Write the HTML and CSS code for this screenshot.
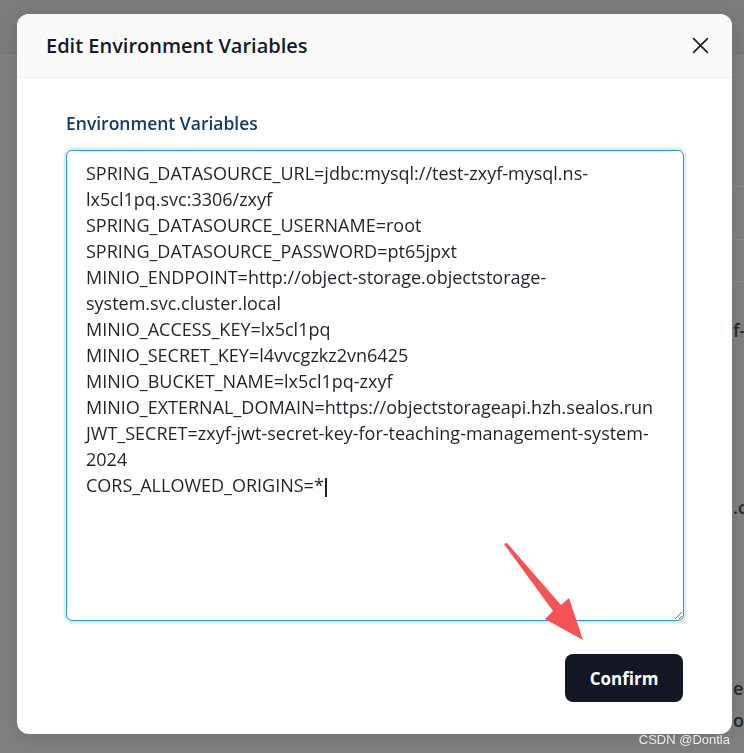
FILE: index.html
```html
<!DOCTYPE html>
<html lang="en">
<head>
<meta charset="utf-8">
<title>Edit Environment Variables</title>
<link rel="stylesheet" href="styles.css">
</head>
<body>
<div class="bg-page">
  <div class="bg-header"></div>
  <div class="bg-content">
    <div class="bg-row bg-row-1"></div>
    <div class="bg-row bg-row-2"></div>
    <div class="bg-row bg-row-3"></div>
    <div class="bg-text bg-t1">f-</div>
    <div class="bg-text bg-t2">.c</div>
    <div class="bg-text bg-t3">ea</div>
    <div class="bg-text bg-t4">or</div>
  </div>
</div>

<div class="modal" role="dialog" aria-labelledby="modal-title">
  <div class="modal-header">
    <h2 class="modal-title" id="modal-title">Edit Environment Variables</h2>
    <button class="close-btn" type="button" aria-label="Close">
      <svg viewBox="0 0 16 16" width="17" height="17" fill="none" stroke="#1f2430" stroke-width="1.7" stroke-linecap="round">
        <path d="M1.5 1.5 L14.5 14.5 M14.5 1.5 L1.5 14.5"/>
      </svg>
    </button>
  </div>
  <div class="modal-body">
    <label class="field-label" for="env">Environment Variables</label>
    <textarea class="env-input" id="env" spellcheck="false">SPRING_DATASOURCE_URL=jdbc:mysql://test-zxyf-mysql.ns-lx5cl1pq.svc:3306/zxyf
SPRING_DATASOURCE_USERNAME=root
SPRING_DATASOURCE_PASSWORD=pt65jpxt
MINIO_ENDPOINT=http://object-storage.objectstorage-system.svc.cluster.local
MINIO_ACCESS_KEY=lx5cl1pq
MINIO_SECRET_KEY=l4vvcgzkz2vn6425
MINIO_BUCKET_NAME=lx5cl1pq-zxyf
MINIO_EXTERNAL_DOMAIN=https://objectstorageapi.hzh.sealos.run
JWT_SECRET=zxyf-jwt-secret-key-for-teaching-management-system-2024
CORS_ALLOWED_ORIGINS=*</textarea>
    <div class="modal-footer">
      <button class="confirm-btn" type="button">Confirm</button>
    </div>
  </div>
</div>

<span class="text-caret"></span>

<svg class="annot-arrow" width="744" height="753" viewBox="0 0 744 753">
  <path d="M504 544 L507 543 L561 605 L569 598 L583 640 L545 619 L553 611 Z" fill="#f65454"/>
</svg>

<div class="watermark">CSDN @Dontla</div>
</body>
</html>
```

FILE: styles.css
```css
* { box-sizing: border-box; }

html, body {
  margin: 0;
  padding: 0;
}

body {
  width: 744px;
  height: 753px;
  overflow: hidden;
  background: #808080;
  font-family: "Open Sans", "Noto Sans", "Liberation Sans", sans-serif;
  color: #1a202c;
}

/* ---------- background page (behind overlay) ---------- */
.bg-page {
  height: 753px;
}
.bg-header {
  height: 54px;
  background: #7b7b7b;
  border-bottom: 1px solid #767676;
}
.bg-content {
  padding-left: 733px;
}
.bg-row {
  border-bottom: 1px solid #8a8a8a;
}
.bg-row-1 { height: 133px; }
.bg-row-2 { height: 53px; }
.bg-row-3 { height: 42px; }
.bg-text {
  font-size: 18px;
  font-weight: 600;
  color: #2b2b2b;
  line-height: 24px;
  white-space: nowrap;
}
.bg-t1 { margin-top: 36px; }
.bg-t2 { margin-top: 153px; }
.bg-t3 { margin-top: 157px; }
.bg-t4 { margin-top: 8px; }

/* ---------- modal ---------- */
.modal {
  position: fixed;
  top: 14px;
  left: 17px;
  width: 715px;
  height: 720px;
  background: #ffffff;
  border-radius: 12px;
  box-shadow: 0 4px 18px rgba(0, 0, 0, 0.12);
  display: flex;
  flex-direction: column;
  overflow: hidden;
}

.modal-header {
  height: 64px;
  flex: none;
  background: #fafafa;
  border-bottom: 1px solid #eef0f2;
  display: flex;
  align-items: center;
  justify-content: space-between;
  padding: 0 23px 0 29px;
}

.modal-title {
  margin: 0;
  font-size: 20px;
  font-weight: 600;
  color: #141a26;
  letter-spacing: 0;
}

.close-btn {
  border: 0;
  background: transparent;
  padding: 0;
  width: 18px;
  height: 18px;
  display: flex;
  align-items: center;
  justify-content: center;
  cursor: pointer;
}

.modal-body {
  flex: 1;
  display: flex;
  flex-direction: column;
  padding: 32px 49px 32px 49px;
}

.field-label {
  display: block;
  font-size: 17.5px;
  line-height: 26px;
  font-weight: 600;
  color: #163a66;
}

.env-input {
  margin-top: 14px;
  width: 618px;
  height: 471px;
  border: 1px solid #2196f3;
  border-radius: 6px;
  box-shadow: 0 0 0 2.5px #dfeefd;
  padding: 9px 19px;
  font-family: "Open Sans", "Noto Sans", "Liberation Sans", sans-serif;
  font-size: 18px;
  line-height: 26px;
  color: #1f2329;
  background: #ffffff;
  outline: none;
  resize: both;
}

.modal-footer {
  margin-top: 33px;
  display: flex;
  justify-content: flex-end;
}

.confirm-btn {
  width: 118px;
  height: 48px;
  border: 0;
  border-radius: 8px;
  background: #131824;
  color: #ffffff;
  font-family: "Open Sans", "Noto Sans", "Liberation Sans", sans-serif;
  font-size: 17px;
  font-weight: 700;
  cursor: pointer;
}

/* ---------- overlays ---------- */
.text-caret {
  position: fixed;
  left: 325px;
  top: 478px;
  width: 1.5px;
  height: 19px;
  background: #1f2329;
  pointer-events: none;
}

.annot-arrow {
  position: fixed;
  top: 0;
  left: 0;
  pointer-events: none;
}

.watermark {
  position: fixed;
  right: 14px;
  bottom: 6px;
  font-family: "Liberation Sans", "DejaVu Sans", sans-serif;
  font-size: 13px;
  color: rgba(255, 255, 255, 0.85);
  pointer-events: none;
}
```
